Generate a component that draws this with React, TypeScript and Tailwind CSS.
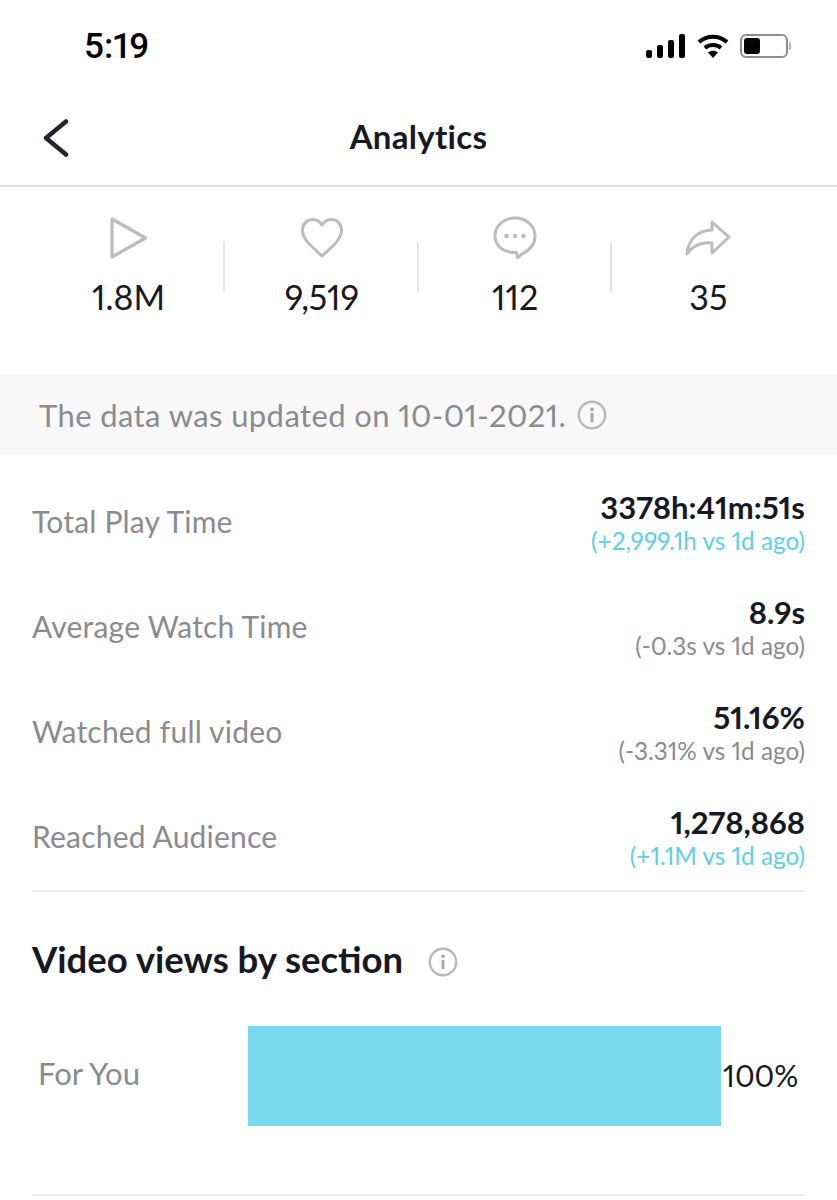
const font = { fontFamily: "Lato, 'Liberation Sans', sans-serif" };

const metrics = [
  { label: "Total Play Time", value: "3378h:41m:51s", delta: "(+2,999.1h vs 1d ago)", up: true },
  { label: "Average Watch Time", value: "8.9s", delta: "(-0.3s vs 1d ago)", up: false },
  { label: "Watched full video", value: "51.16%", delta: "(-3.31% vs 1d ago)", up: false },
  { label: "Reached Audience", value: "1,278,868", delta: "(+1.1M vs 1d ago)", up: true },
];

function InfoIcon({ size }: { size: number }) {
  return (
    <svg width={size} height={size} viewBox="0 0 30 30" fill="none" className="shrink-0">
      <circle cx="15" cy="15" r="13.2" stroke="#b9b9bb" strokeWidth="2.4" />
      <circle cx="15" cy="9.2" r="1.8" fill="#a5a5a8" />
      <rect x="13.6" y="12.8" width="2.8" height="9.4" rx="1.2" fill="#a5a5a8" />
    </svg>
  );
}

function PlayIcon() {
  return (
    <svg width="40" height="44" viewBox="0 0 40 44" fill="none">
      <path d="M3 3 L36.5 22 L3 41 Z" stroke="#bcbcbd" strokeWidth="3.2" strokeLinejoin="round" />
    </svg>
  );
}

function HeartIcon() {
  return (
    <svg width="44" height="42" viewBox="0 0 44 42" fill="none">
      <path
        d="M22 39 C15 32 2.5 24 2.5 13 C2.5 6.5 7.5 2.5 12.5 2.5 C16.5 2.5 20 4.5 22 8 C24 4.5 27.5 2.5 31.5 2.5 C36.5 2.5 41.5 6.5 41.5 13 C41.5 24 29 32 22 39 Z"
        stroke="#bcbcbd"
        strokeWidth="3"
        strokeLinejoin="round"
      />
    </svg>
  );
}

function CommentIcon() {
  return (
    <svg width="44" height="44" viewBox="0 0 44 44" fill="none">
      <path
        d="M22 2 C33 2 42 9.5 42 20 C42 29 35 35 29 38 L24.5 41.5 L23.5 36.5 C11 37 2 30 2 20 C2 9.5 11 2 22 2 Z"
        stroke="#bcbcbd"
        strokeWidth="3"
        strokeLinejoin="round"
      />
      <circle cx="13.5" cy="20" r="2.2" fill="#bcbcbd" />
      <circle cx="22" cy="20" r="2.2" fill="#bcbcbd" />
      <circle cx="30.5" cy="20" r="2.2" fill="#bcbcbd" />
    </svg>
  );
}

function ShareIcon() {
  return (
    <svg width="46" height="36" viewBox="0 0 46 36" fill="none">
      <path
        d="M27 2 L44 17 L27 33 L27 23 C17 22 8 25 2 34 C3 20 13 10 27 10 Z"
        stroke="#bcbcbd"
        strokeWidth="3"
        strokeLinejoin="round"
      />
    </svg>
  );
}

const stats = [
  { icon: <PlayIcon />, value: "1.8M" },
  { icon: <HeartIcon />, value: "9,519" },
  { icon: <CommentIcon />, value: "112" },
  { icon: <ShareIcon />, value: "35" },
];

export default function App() {
  return (
    <div className="w-[837px] h-[1200px] bg-white overflow-hidden text-[#161823] proportional-nums" style={font}>
      {/* Status bar */}
      <div className="h-[92px] flex items-center justify-between pl-[84px] pr-[46px]">
        <span className="text-[35px] font-medium text-black mt-[3px]" style={{ fontFamily: "Roboto, sans-serif" }}>
          5:19
        </span>
        <div className="flex items-center gap-[11px]">
          <svg width="40" height="24" viewBox="0 0 40 24" fill="#000">
            <rect x="0" y="16" width="6" height="8" rx="2" />
            <rect x="11" y="11" width="6" height="13" rx="2" />
            <rect x="22" y="6" width="6" height="18" rx="2" />
            <rect x="33" y="0" width="6" height="24" rx="2" />
          </svg>
          <svg width="32" height="24" viewBox="0 0 32 24" fill="none" stroke="#000" strokeWidth="4">
            <path d="M2 8 C10 1 22 1 30 8" />
            <path d="M8 14 C12 10 20 10 24 14" />
            <path d="M16 24 L11 18.500 C14 16 18 16 21 18.500 Z" fill="#000" stroke="none" />
          </svg>
          <div className="flex items-center">
            <div className="w-[48px] h-[24px] border-2 border-[#8e8e8e] rounded-[6px] p-[2px] flex">
              <div className="w-[16px] bg-black rounded-[3px]" />
            </div>
            <div className="w-[2px] h-[8px] bg-[#b5b5b5] rounded-r ml-[1px]" />
          </div>
        </div>
      </div>

      {/* Nav */}
      <div className="h-[95px] border-b-2 border-[#dfdfe0] flex items-center justify-center relative">
        <svg width="28" height="38" viewBox="0 0 28 38" fill="none" className="absolute left-[42px] top-[27px]">
          <path d="M24 2.500 L4 19 L24 35.500" stroke="#23242e" strokeWidth="4.500" strokeLinecap="round" strokeLinejoin="round" />
        </svg>
        <h1 className="text-[33px] font-bold leading-none mb-[5px] tracking-[0.3px]">Analytics</h1>
      </div>

      {/* Stats */}
      <div className="h-[188px] px-[32px] pt-[27px] grid grid-cols-4">
        {stats.map((s, i) => (
          <div key={s.value} className="flex flex-col items-center relative">
            <div className="h-[48px] flex items-center justify-center">{s.icon}</div>
            <div className="text-[34px] leading-none mt-[18px]">{s.value}</div>
            {i < 3 && <div className="absolute right-0 top-[28px] w-[2px] h-[50px] bg-[#e3e3e4]" />}
          </div>
        ))}
      </div>

      {/* Updated notice */}
      <div className="h-[80px] bg-[#f8f8f8] flex items-center pl-[39px] gap-[11px]">
        <span className="text-[31px] text-[#8a8b91] tracking-[0.4px]">The data was updated on 10-01-2021.</span>
        <InfoIcon size={30} />
      </div>

      {/* Metrics */}
      <div className="mx-[32px] mt-[14px] pb-[1px] border-b-2 border-[#ececed]">
        {metrics.map((m) => (
          <div key={m.label} className="h-[105px] flex items-center justify-between">
            <span className="text-[30px] text-[#8a8b91] tracking-[0.2px]">{m.label}</span>
            <div className="text-right mt-[3px]">
              <div className="text-[31px] font-bold leading-[35px]">{m.value}</div>
              <div className={`text-[24.300px] leading-[32px] ${m.up ? "text-[#5fcfe6]" : "text-[#8a8b91]"}`}>{m.delta}</div>
            </div>
          </div>
        ))}
      </div>

      {/* Views by section */}
      <div className="mx-[32px] mt-[43px] flex items-center">
        <h2 className="text-[36.500px] font-bold leading-[48px]">Video views by section</h2>
        <div className="ml-[25px] mt-[5px]">
          <InfoIcon size={30} />
        </div>
      </div>
      <div className="mx-[32px] mt-[43px] pb-[68px] border-b-2 border-[#ececed] flex items-center">
        <span className="w-[216px] pl-[6px] text-[31px] text-[#8a8b91] mb-[5px]">For You</span>
        <div className="w-[473px] h-[100px] bg-[#7ad8ef]" />
        <span className="ml-[2px] text-[30px] mb-[1px]">100%</span>
      </div>
    </div>
  );
}
